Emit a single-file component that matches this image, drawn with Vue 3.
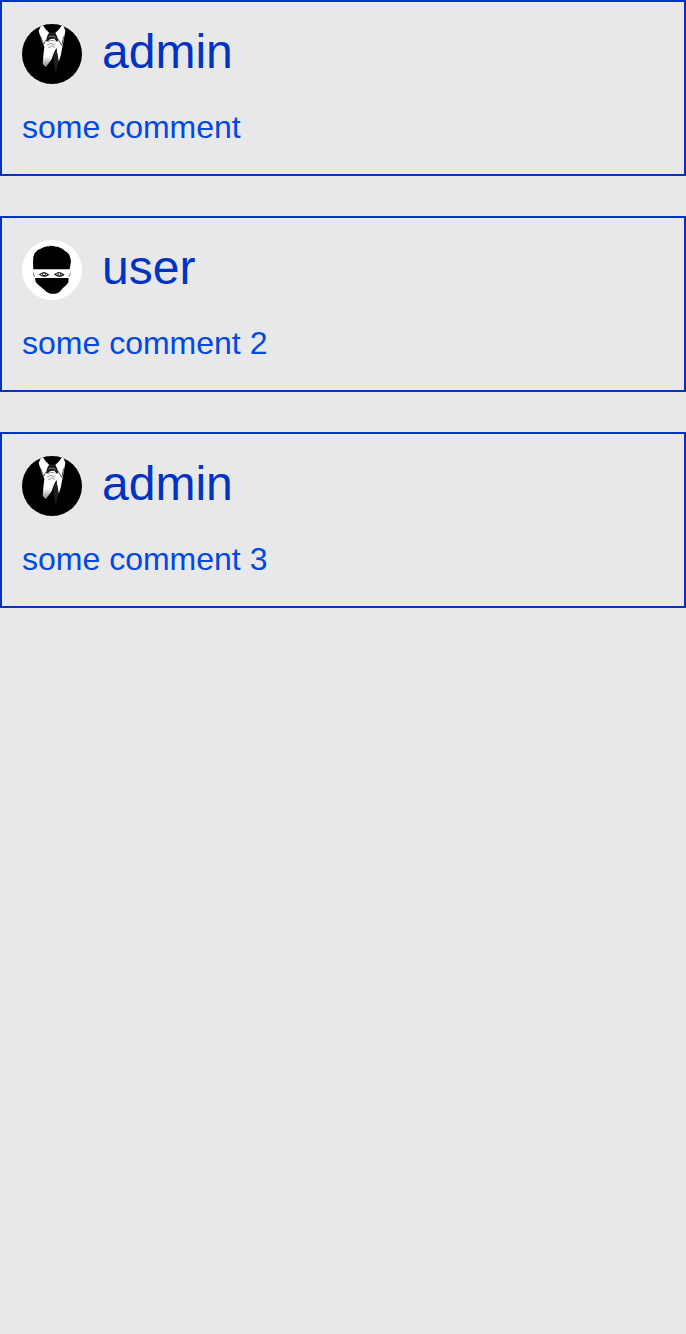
<script setup>
const comments = [
  { id: 1, author: 'admin', text: 'some comment' },
  { id: 2, author: 'user', text: 'some comment 2' },
  { id: 3, author: 'admin', text: 'some comment 3' },
]
</script>

<template>
  <main class="comments">
    <article v-for="comment in comments" :key="comment.id" class="comment">
      <header class="author">
        <svg v-if="comment.author === 'admin'" class="avatar suit" viewBox="12 12 180 180" aria-hidden="true">
          <defs>
            <linearGradient :id="`fade-${comment.id}`" x1="0" y1="0" x2="0" y2="1">
              <stop offset="0.75" stop-color="#fff" />
              <stop offset="1" stop-color="#888" />
            </linearGradient>
          </defs>
          <!-- collar, shirt and the raised forearm -->
          <path d="M71 12 62 33 71 62 79 80 76 108 74 131 83 141 92 130 101 118 107 100 115 85 122 126 128 108 134 76 142 33 135 12Z" :fill="`url(#fade-${comment.id})`" />
          <path d="M72 12H134L124 27 112 39H94L83 28Z" fill="#000" />
          <!-- tie knot and tail -->
          <path d="M94 37H111L117 48 121 61 117 66 109 56 97 57 88 65 84 62 88 47Z" fill="#1c1c1c" />
          <path d="M115 84 119 108 121 128 113 158 108 130 107 106Z" fill="#202020" />
          <!-- fingers -->
          <path d="M90 66 99 61 110 63 M87 75 99 70 112 75 M91 83 101 78 110 82" fill="none" stroke="#555" stroke-width="2" />
          <path d="M92 51Q102 45 113 52" fill="none" stroke="#999" stroke-width="2.4" />
          <path d="M67 47 77 73 84 60 M137 49 131 76 120 57" fill="none" stroke="#222" stroke-width="2.2" />
        </svg>
        <svg v-else class="avatar mask" viewBox="12 12 180 180" aria-hidden="true">
          <!-- hair and upper hood -->
          <path d="M46 99 45 82 46 62 50 52 59 42 68 38 77 34 88 31 95 33 91 29 106 30 113 32 120 32 127 36 133 38 141 45 149 50 154 57 157 66 159 76 157 88 155 99Z" />
          <path d="M46 99H155V101H46Z" fill="#aaa" />
          <path d="M46 110 48 120 51 123 M157 110 155 119 152 123" fill="none" stroke="#333" stroke-width="2" />
          <!-- lower face cover -->
          <path d="M51 126H152L151 139 145 147 134 157 124 169 113 173H97L86 168 75 158 59 145 53 137Z" />
          <g fill="#fff" stroke="#111" stroke-width="3.4">
            <path d="M65 115Q78 105 91 116Q78 125 65 115Z" />
            <path d="M110 115Q123 105 137 116Q124 125 110 115Z" />
          </g>
          <g fill="#eee" stroke="#111" stroke-width="3">
            <circle cx="78" cy="114.5" r="4.6" />
            <circle cx="124" cy="114.5" r="4.6" />
          </g>
        </svg>
        <span class="name">{{ comment.author }}</span>
      </header>
      <p class="text">{{ comment.text }}</p>
    </article>
  </main>
</template>

<style>
body {
  background: #e8e8ea;
}
</style>

<style scoped>
.comments {
  display: flex;
  flex-direction: column;
  gap: 40px;
  min-height: 100vh;
  background: #e8e8ea;
  font-family: "Liberation Sans", Arial, sans-serif;
}

.comment {
  box-sizing: border-box;
  height: 176px;
  padding: 22px 20px;
  border: 2px solid #0033c4;
}

.author {
  display: flex;
  align-items: flex-start;
  gap: 20px;
  height: 60px;
}

.avatar {
  width: 60px;
  height: 60px;
  border-radius: 50%;
}

.suit {
  background: #000;
}

.mask {
  background: #fff;
}

.name {
  color: #0033c4;
  font-size: 48px;
  line-height: 55px;
}

.text {
  margin: 25px 0 0;
  color: #0048e4;
  font-size: 32px;
  line-height: 37px;
}
</style>
